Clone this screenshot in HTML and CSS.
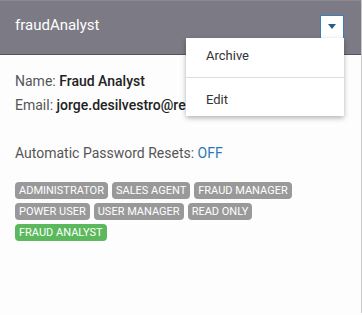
FILE: index.html
```html
<!DOCTYPE html>
<html lang="en">
<head>
<meta charset="UTF-8">
<title>fraudAnalyst</title>
<link rel="stylesheet" href="styles.css">
</head>
<body>
<div class="card">
  <div class="card-header">
    <span class="card-title">fraudAnalyst</span>
    <button class="menu-toggle" type="button">
      <svg width="8" height="5" viewBox="0 0 8 5"><path d="M0 0h8L4 5z" fill="#1f5f94"/></svg>
    </button>
    <ul class="menu">
      <li>Archive</li>
      <li>Edit</li>
    </ul>
  </div>
  <div class="card-body">
    <p class="field">Name: <strong>Fraud Analyst</strong></p>
    <p class="field">Email: <strong>jorge.desilvestro@relaymobile.com</strong></p>
    <p class="field resets">Automatic Password Resets: <span class="off">OFF</span></p>
    <div class="roles">
      <span class="role">Administrator</span>
      <span class="role">Sales Agent</span>
      <span class="role">Fraud Manager</span>
      <span class="role">Power User</span>
      <span class="role">User Manager</span>
      <span class="role">Read Only</span>
      <span class="role active">Fraud Analyst</span>
    </div>
  </div>
</div>
</body>
</html>
```

FILE: styles.css
```css
body {
  margin: 0;
  font-family: Roboto, "Liberation Sans", sans-serif;
  background-color: #fdfdfd;
}
.card {
  width: 361px;
  height: 313px;
  border-right: 1px solid #c8c8c8;
  background-color: #fdfdfd;
  overflow: hidden;
}
.card-header {
  position: relative;
  height: 53px;
  background-color: #7b7a85;
  border-top: 1px solid #8c8b95;
  border-bottom: 1px solid #55545c;
  display: flex;
  align-items: center;
  justify-content: space-between;
  padding: 0 17px 0 15px;
}
.card-title {
  color: white;
  font-size: 15px;
  margin-top: -5px;
}
.menu-toggle {
  width: 24px;
  height: 24px;
  margin-top: -2px;
  background-color: white;
  border: 1px solid #3b7fb8;
  border-radius: 0;
  padding: 0;
  display: flex;
  align-items: center;
  justify-content: center;
}
.menu {
  position: absolute;
  top: 37px;
  left: 186px;
  width: 158px;
  margin: 0;
  padding: 0;
  list-style: none;
  background-color: white;
  box-shadow: 0 2px 5px rgba(0, 0, 0, 0.3);
  z-index: 2;
}
.menu li {
  height: 39px;
  line-height: 36px;
  padding-left: 20px;
  font-size: 13px;
  color: #333;
}
.menu li + li {
  border-top: 1px solid #ddd;
  height: 38px;
  line-height: 43px;
}
.card-body {
  padding: 18px 15px;
}
.field {
  margin: 0 0 8px;
  font-size: 14px;
  color: #555;
  line-height: 16px;
}
.field strong {
  font-weight: 500;
  color: #222;
}
.resets {
  margin-top: 32px;
  margin-bottom: 21px;
}
.off {
  color: #2a7ab8;
}
.roles {
  display: flex;
  flex-wrap: wrap;
  gap: 4px 4px;
  width: 300px;
}
.role {
  background-color: #999;
  color: white;
  font-size: 11px;
  text-transform: uppercase;
  padding: 1px 4px;
  border-radius: 4px;
  line-height: 15px;
}
.role.active {
  background-color: #5cb85c;
}
```
